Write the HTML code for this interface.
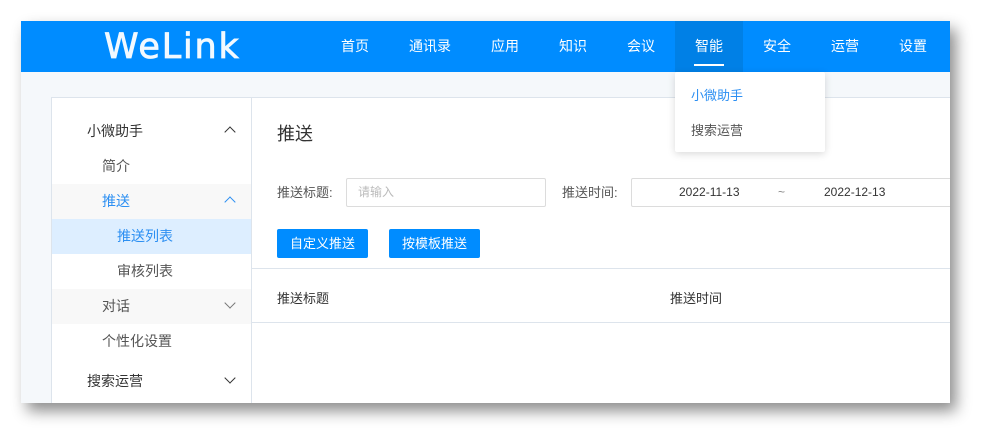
<!DOCTYPE html>
<html><head><meta charset="utf-8"><style>
*{margin:0;padding:0;box-sizing:border-box}
body{width:992px;height:445px;background:#fff;font-family:"Liberation Sans","Noto Sans CJK SC",sans-serif;position:relative;overflow:hidden}
.win{position:absolute;left:21px;top:21px;width:929px;height:382px;background:#f5f8fb;box-shadow:6px 8px 14px rgba(0,0,0,.45);overflow:hidden}
.hd{position:absolute;left:0;top:0;width:929px;height:51px;background:#008cff}
.logo{position:absolute;left:83px;top:6px;color:#fff;font-size:35px;font-weight:normal;letter-spacing:1.8px;font-family:"DejaVu Sans",sans-serif;-webkit-text-stroke:0.8px #fff;opacity:.95}
.nav{position:absolute;top:0;height:51px;line-height:51px;color:#fff;font-size:14px;width:68px;text-align:center}
.act{background:#0080e6}
.ul{position:absolute;left:673px;top:43px;width:30px;height:2px;background:#fff}
.panel{position:absolute;left:30px;top:76px;width:900px;height:310px;background:#fff;border:1px solid #dde4ec}
.side{position:absolute;left:0;top:0;width:200px;height:310px;border-right:1px solid #dde4ec}
.r{position:absolute;left:0;width:199px;height:35px;line-height:35px;font-size:14px;color:#333}
.chev{position:absolute;left:174px;top:14px;width:8px;height:8px;border-left:1.3px solid #333;border-top:1.3px solid #333;transform:rotate(45deg)}
.down{transform:rotate(225deg);top:10px}
.main{position:absolute;left:200px;top:0;right:0;height:310px}
.t{position:absolute;font-size:13px;color:#333}
.inp{position:absolute;height:29px;border:1px solid #dcdcdc;border-radius:2px;font-size:12px;line-height:27px}
.btn{position:absolute;top:131px;width:91px;height:29px;background:#008cff;color:#fff;font-size:13px;text-align:center;line-height:29px;border-radius:2px}
.dd{position:absolute;left:675px;top:72px;width:150px;height:80px;background:#fff;box-shadow:0 2px 8px rgba(0,0,0,.15);border-radius:2px;font-size:13px}
</style></head><body>
<div class="win">
<div class="hd">
<div class="logo">WeLink</div>
<div class="nav" style="left:300px">首页</div>
<div class="nav" style="left:375px">通讯录</div>
<div class="nav" style="left:450px">应用</div>
<div class="nav" style="left:518px">知识</div>
<div class="nav" style="left:586px">会议</div>
<div class="nav act" style="left:654px">智能</div>
<div class="ul"></div>
<div class="nav" style="left:722px">安全</div>
<div class="nav" style="left:790px">运营</div>
<div class="nav" style="left:858px">设置</div>
</div>
<div class="panel">
<div class="side">
<div class="r" style="top:16px;padding-left:35px">小微助手<span class="chev"></span></div>
<div class="r" style="top:51px;padding-left:50px;color:#555">简介</div>
<div class="r" style="top:86px;padding-left:50px;background:#f8f8f8;color:#2c8ff2">推送<span class="chev" style="border-color:#2c8ff2"></span></div>
<div class="r" style="top:121px;padding-left:65px;background:#ddeeff;color:#2c8ff2">推送列表</div>
<div class="r" style="top:156px;padding-left:65px;color:#555">审核列表</div>
<div class="r" style="top:191px;padding-left:50px;background:#f8f8f8;color:#555">对话<span class="chev down" style="border-color:#777"></span></div>
<div class="r" style="top:226px;padding-left:50px;color:#555">个性化设置</div>
<div class="r" style="top:266px;padding-left:35px">搜索运营<span class="chev down"></span></div>
</div>
<div class="main">
<div class="t" style="left:25px;top:22px;font-size:18px">推送</div>
<div class="t" style="left:25px;top:84px;color:#555">推送标题:</div>
<div class="inp" style="left:94px;top:80px;width:200px;color:#bbb;padding-left:11px">请输入</div>
<div class="t" style="left:310px;top:84px;color:#555">推送时间:</div>
<div class="inp" style="left:379px;top:80px;width:340px;color:#333">
<span style="position:absolute;left:47px">2022-11-13</span><span style="position:absolute;left:146px;color:#888">~</span><span style="position:absolute;left:192px">2022-12-13</span></div>
<div class="btn" style="left:25px">自定义推送</div>
<div class="btn" style="left:137px">按模板推送</div>
<div style="position:absolute;left:0;right:0;top:170px;border-top:1px solid #dde4ec"></div>
<div class="t" style="left:25px;top:190px">推送标题</div>
<div class="t" style="left:418px;top:190px">推送时间</div>
<div style="position:absolute;left:0;right:0;top:224px;border-top:1px solid #dde4ec"></div>
</div>
</div>
</div>
<div class="dd">
<div style="position:absolute;left:16px;top:13px;color:#2c8ff2">小微助手</div>
<div style="position:absolute;left:16px;top:48px;color:#555">搜索运营</div>
</div>
</body></html>
